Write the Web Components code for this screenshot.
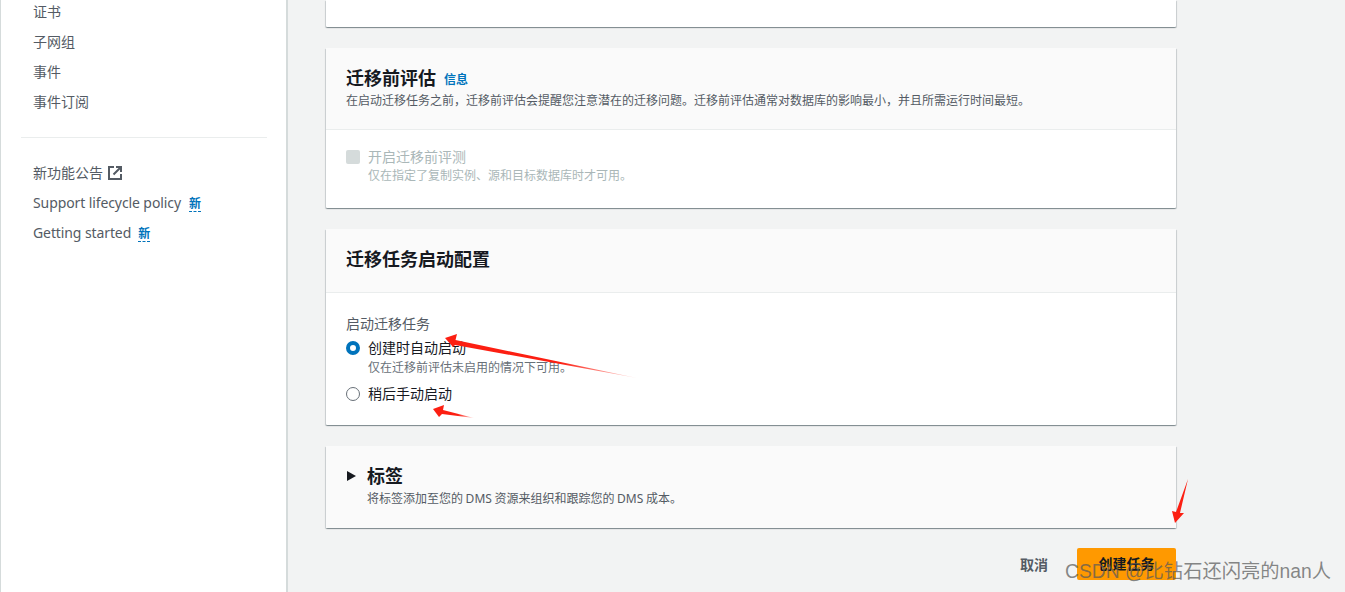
<!DOCTYPE html>
<html lang="zh">
<head>
<meta charset="utf-8">
<title>创建任务</title>
<style>
  html, body { margin: 0; height: 592px; overflow: hidden; background: #f2f3f3; }
  body {
    position: relative;
    display: flex;
    font-family: "Noto Sans", "Noto Sans CJK SC", sans-serif;
    font-size: 14px;
    color: #16191f;
  }
</style>
</head>
<body>
<side-nav></side-nav>
<main-column>
  <form-card tail></form-card>
  <form-card>
    <card-header slot="head" style="--head-h:82px">
      <span slot="title">迁移前评估</span>
      <span slot="info">信息</span>
      <span slot="desc">在启动迁移任务之前，迁移前评估会提醒您注意潜在的迁移问题。迁移前评估通常对数据库的影响最小，并且所需运行时间最短。</span>
    </card-header>
    <check-option label="开启迁移前评测" hint="仅在指定了复制实例、源和目标数据库时才可用。"></check-option>
  </form-card>
  <form-card>
    <card-header slot="head" style="--head-h:64px">
      <span slot="title">迁移任务启动配置</span>
    </card-header>
    <start-options></start-options>
  </form-card>
  <form-card>
    <tag-section slot="head"></tag-section>
  </form-card>
  <form-actions></form-actions>
</main-column>
<red-arrows></red-arrows>
<water-mark>CSDN @比钻石还闪亮的nan人</water-mark>

<script>
const CJK = '"Noto Sans", "Noto Sans CJK SC", sans-serif'

class SideNav extends HTMLElement {
  constructor () {
    super()
    this.attachShadow({ mode: 'open' })
  }

  connectedCallback () {
    this.shadowRoot.innerHTML = /* html */`
      <style>
        :host {
          display: block;
          box-sizing: border-box;
          flex: 0 0 288px;
          height: 592px;
          background: #fff;
          border-left: 1px solid #d5dbdb;
          border-right: 2px solid #d5dbdb;
          font-family: ${CJK};
          font-size: 14px;
          color: #545b64;
        }
        ul { list-style: none; margin: 0; padding: 0 0 0 32px; }
        li { height: 30px; line-height: 30px; white-space: nowrap; display: flex; align-items: center; }
        .top { margin-top: -3px; }
        hr { border: 0; border-top: 1px solid #eaeded; margin: 20px 19px 20px 20px; }
        .latin { letter-spacing: -.1px; }
        .new {
          color: #0073bb;
          font-size: 12px;
          font-weight: 700;
          line-height: 15px;
          margin-left: 8px;
          position: relative;
          top: 1px;
          border-bottom: 1px dashed #0073bb;
        }
        .new.near { margin-left: 7px; }
        svg { margin-left: 5px; }
      </style>
      <ul class="top">
        <li>证书</li>
        <li>子网组</li>
        <li>事件</li>
        <li>事件订阅</li>
      </ul>
      <hr>
      <ul>
        <li>新功能公告
          <svg width="14" height="14" viewBox="0 0 14 14" fill="none" stroke="#545b64" stroke-width="2">
            <path d="M6 1H1v12h12V8"/>
            <path d="M5.500 8.500L12.500 1.500M8 1h5v5"/>
          </svg>
        </li>
        <li class="latin">Support lifecycle policy<span class="new">新</span></li>
        <li class="latin">Getting started<span class="new near">新</span></li>
      </ul>
    `
  }
}

class MainColumn extends HTMLElement {
  constructor () {
    super()
    this.attachShadow({ mode: 'open' })
  }

  connectedCallback () {
    this.shadowRoot.innerHTML = /* html */`
      <style>
        :host {
          display: flex;
          flex-direction: column;
          gap: 21px;
          width: 850px;
          margin-left: 38px;
        }
      </style>
      <slot></slot>
    `
  }
}

class FormCard extends HTMLElement {
  constructor () {
    super()
    this.attachShadow({ mode: 'open' })
  }

  connectedCallback () {
    this.shadowRoot.innerHTML = /* html */`
      <style>
        :host {
          display: block;
          background: #fff;
          border-radius: 0 0 1px 1px;
          box-shadow: 0 1px 1px 0 rgba(0, 28, 36, .3), 1px 1px 1px 0 rgba(0, 28, 36, .15), -1px 1px 1px 0 rgba(0, 28, 36, .15);
        }
        :host([tail]) { height: 27px; }
      </style>
      <slot name="head"></slot>
      <slot></slot>
    `
  }
}

class CardHeader extends HTMLElement {
  constructor () {
    super()
    this.attachShadow({ mode: 'open' })
  }

  connectedCallback () {
    this.shadowRoot.innerHTML = /* html */`
      <style>
        :host {
          display: block;
          box-sizing: border-box;
          height: var(--head-h);
          padding: 15px 20px 0;
          background: #fafafa;
          border-bottom: 1px solid #eaeded;
        }
        .line { display: flex; align-items: center; height: 30px; }
        .title { font-size: 18px; font-weight: 700; color: #16191f; line-height: 30px; }
        .info { font-size: 12px; font-weight: 700; color: #0073bb; margin-left: 8px; position: relative; top: 1px; }
        .desc { font-size: 12px; line-height: 16px; color: #545b64; white-space: nowrap; }
      </style>
      <div class="line">
        <span class="title"><slot name="title"></slot></span>
        <span class="info"><slot name="info"></slot></span>
      </div>
      <div class="desc"><slot name="desc"></slot></div>
    `
  }
}

class CheckOption extends HTMLElement {
  constructor () {
    super()
    this.attachShadow({ mode: 'open' })
  }

  connectedCallback () {
    this.shadowRoot.innerHTML = /* html */`
      <style>
        :host {
          display: flex;
          box-sizing: border-box;
          height: 78px;
          padding: 18px 20px 0;
          gap: 8px;
        }
        .box { width: 14px; height: 14px; margin-top: 2px; background: #d5dbdb; border-radius: 2px; }
        .label { font-size: 14px; line-height: 18px; color: #aab7b8; }
        .hint { font-size: 12px; line-height: 18px; color: #aab7b8; margin-top: 1px; }
      </style>
      <div class="box"></div>
      <div>
        <div class="label">${this.getAttribute('label')}</div>
        <div class="hint">${this.getAttribute('hint')}</div>
      </div>
    `
  }
}

class RadioOption extends HTMLElement {
  constructor () {
    super()
    this.attachShadow({ mode: 'open' })
  }

  connectedCallback () {
    const on = this.hasAttribute('checked')
    const hint = this.getAttribute('hint')
    this.shadowRoot.innerHTML = /* html */`
      <style>
        :host { display: flex; gap: 8px; }
        .dot {
          box-sizing: border-box;
          width: 14px;
          height: 14px;
          margin-top: 2px;
          border-radius: 50%;
          background: #fff;
          border: ${on ? '4px solid #0073bb' : '1px solid #687078'};
        }
        .label { font-size: 14px; line-height: 18px; color: #16191f; }
        .hint { font-size: 12px; line-height: 16px; color: #687078; margin-top: 3px; }
      </style>
      <div class="dot"></div>
      <div>
        <div class="label">${this.getAttribute('label')}</div>
        ${hint ? `<div class="hint">${hint}</div>` : ''}
      </div>
    `
  }
}

class StartOptions extends HTMLElement {
  constructor () {
    super()
    this.attachShadow({ mode: 'open' })
  }

  connectedCallback () {
    this.shadowRoot.innerHTML = /* html */`
      <style>
        :host {
          display: flex;
          flex-direction: column;
          box-sizing: border-box;
          height: 132px;
          padding: 22px 20px 0;
        }
        .legend { font-size: 14px; line-height: 18px; color: #545b64; margin-bottom: 6px; }
        radio-option + radio-option { margin-top: 9px; }
      </style>
      <div class="legend">启动迁移任务</div>
      <radio-option checked label="创建时自动启动" hint="仅在迁移前评估未启用的情况下可用。"></radio-option>
      <radio-option label="稍后手动启动"></radio-option>
    `
  }
}

class TagSection extends HTMLElement {
  constructor () {
    super()
    this.attachShadow({ mode: 'open' })
  }

  connectedCallback () {
    this.shadowRoot.innerHTML = /* html */`
      <style>
        :host {
          display: flex;
          box-sizing: border-box;
          height: 82px;
          padding: 15px 20px 0 21px;
          background: #fafafa;
          gap: 11px;
        }
        svg { margin-top: 10px; }
        .title { font-size: 18px; font-weight: 700; line-height: 30px; color: #16191f; }
        .desc { font-size: 12px; line-height: 16px; color: #545b64; word-spacing: -.5px; }
      </style>
      <svg width="9" height="10" viewBox="0 0 9 10"><path d="M0 0l9 5-9 5z" fill="#16191f"/></svg>
      <div>
        <div class="title">标签</div>
        <div class="desc">将标签添加至您的 DMS 资源来组织和跟踪您的 DMS 成本。</div>
      </div>
    `
  }
}

class FormActions extends HTMLElement {
  constructor () {
    super()
    this.attachShadow({ mode: 'open' })
  }

  connectedCallback () {
    this.shadowRoot.innerHTML = /* html */`
      <style>
        :host {
          display: flex;
          justify-content: flex-end;
          align-items: center;
          gap: 29px;
          margin-top: -1px;
          font-size: 14px;
          font-weight: 700;
        }
        .cancel { color: #545b64; }
        .go {
          width: 99px;
          height: 32px;
          line-height: 32px;
          text-align: center;
          background: #ff9900;
          color: #16191f;
          border-radius: 2px;
        }
      </style>
      <span class="cancel">取消</span>
      <span class="go">创建任务</span>
    `
  }
}

class RedArrows extends HTMLElement {
  constructor () {
    super()
    this.attachShadow({ mode: 'open' })
  }

  connectedCallback () {
    this.shadowRoot.innerHTML = /* html */`
      <style>
        :host { position: absolute; left: 0; top: 0; width: 1345px; height: 592px; pointer-events: none; }
        svg { display: block; }
      </style>
      <svg width="1345" height="592" viewBox="0 0 1345 592">
        <defs>
          <linearGradient id="fade" x1="0" x2="1" y1="0" y2="0">
            <stop offset=".6" stop-color="#fc1f12"/>
            <stop offset="1" stop-color="#fc1f12" stop-opacity=".15"/>
          </linearGradient>
        </defs>
        <path d="M445 338L457 334 455.500 340 637 378 455 345 453 347z" fill="url(#fade)"/>
        <path d="M433 409L444 405 443 410 474 418 442 414 439 417z" fill="url(#fade)"/>
        <path d="M1188 479L1180 513 1184 513 1175 523 1172 511 1176 512z" fill="#fc1f12"/>
      </svg>
    `
  }
}

class WaterMark extends HTMLElement {
  constructor () {
    super()
    this.attachShadow({ mode: 'open' })
  }

  connectedCallback () {
    this.shadowRoot.innerHTML = /* html */`
      <style>
        :host {
          position: absolute;
          left: 1065px;
          top: 558px;
          font-family: "Liberation Sans", "Noto Sans CJK SC", sans-serif;
          font-size: 19.300px;
          line-height: 28px;
          white-space: nowrap;
          color: rgba(90, 90, 90, .72);
        }
      </style>
      <slot></slot>
    `
  }
}

customElements.define('side-nav', SideNav)
customElements.define('main-column', MainColumn)
customElements.define('form-card', FormCard)
customElements.define('card-header', CardHeader)
customElements.define('check-option', CheckOption)
customElements.define('radio-option', RadioOption)
customElements.define('start-options', StartOptions)
customElements.define('tag-section', TagSection)
customElements.define('form-actions', FormActions)
customElements.define('red-arrows', RedArrows)
customElements.define('water-mark', WaterMark)
</script>
</body>
</html>
